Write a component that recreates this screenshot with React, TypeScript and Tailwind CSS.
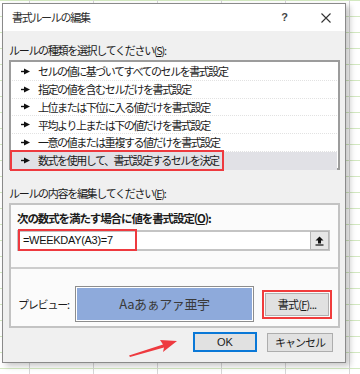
import React from 'react';

const jp = { fontFamily: "'Noto Sans CJK JP', 'Noto Sans', sans-serif" };

const rules = [
  'セルの値に基づいてすべてのセルを書式設定',
  '指定の値を含むセルだけを書式設定',
  '上位または下位に入る値だけを書式設定',
  '平均より上または下の値だけを書式設定',
  '一意の値または重複する値だけを書式設定',
  '数式を使用して、書式設定するセルを決定',
];

const Pointer = () => (
  <svg width="9" height="7" viewBox="0 0 9 7" className="shrink-0">
    <path d="M0 3.5H4" stroke="#111" strokeWidth="1.4" />
    <path d="M3 0.5L9 3.5L3 6.5Z" fill="#111" />
  </svg>
);

const App: React.FC = () => {
  return (
    <div
      className="relative w-[360px] h-[374px] overflow-hidden bg-white bg-[repeating-linear-gradient(to_right,transparent_0_29px,#d6d6d6_29px_30px,transparent_30px_64px),repeating-linear-gradient(to_bottom,#d3e9c1_0_1px,transparent_1px_16px)] pt-[3px] pl-[2px] text-[#1b1b1b]"
      style={jp}
    >
      <div className="w-[344px] h-[360px] flex flex-col border border-[#8a8a8a] bg-[#f0f0f0] shadow-[4px_3px_6px_rgba(0,0,0,0.22)]">
        {/* title bar */}
        <div className="h-[27px] shrink-0 bg-white flex items-center pl-[9px] pr-[14px]">
          <span className="text-[11px] tracking-[-1.3px] text-[#2a2a2a]">書式ルールの編集</span>
          <span className="ml-auto text-[11px] font-bold text-[#444] mr-[33px]" style={{ fontFamily: "'Liberation Sans', sans-serif" }}>?</span>
          <svg width="10" height="10" viewBox="0 0 10 10">
            <path d="M0.5 0.5L9.5 9.5M9.5 0.5L0.5 9.5" stroke="#333" strokeWidth="1.1" />
          </svg>
        </div>

        {/* body */}
        <div className="flex flex-col pl-[6px] pr-[5px]">
          <div className="mt-[11px] h-[16px] leading-[16px] text-[11px] tracking-[-1.3px]">
            ルールの種類を選択してください(<span className="underline">S</span>):
          </div>

          <div className="relative mt-[2px] h-[110px] border-2 border-[#9c9c9c] bg-white pt-[1px] px-[1px]">
            {rules.map((r, i) => (
              <div
                key={r}
                className={`h-[17.8px] flex items-center gap-[8px] pl-[9px] text-[11px] tracking-[-1.45px] border-b border-dotted ${
                  i === 5 ? 'bg-[#e1e1e6] border-transparent' : 'border-[#e2e2e2]'
                }`}
              >
                <Pointer />
                <span>{r}</span>
              </div>
            ))}
            <div className="absolute left-[-1px] top-[88px] w-[214px] h-[21px] border-2 border-[#ee3a3f]" />
          </div>

          <div className="mt-[15px] h-[16px] leading-[16px] text-[11px] tracking-[-1.3px]">
            ルールの内容を編集してください(<span className="underline">E</span>):
          </div>

          <div className="mt-[2px] h-[125px] border-2 border-[#c3c3c3] bg-[#fbfbfb] flex flex-col">
            <div className="pl-[6px] pr-[8px]">
              <div className="mt-[5px] h-[16px] leading-[16px] text-[11.5px] font-bold tracking-[-1.1px]">
                次の数式を満たす場合に値を書式設定(<span className="underline">O</span>):
              </div>
              <div className="relative mt-[4px] h-[21px] border-2 border-[#c4c4c4] bg-white flex items-center">
                <span className="pl-[4px] text-[11px] tracking-[-0.3px] text-[#111]" style={{ fontFamily: "'Liberation Sans', sans-serif" }}>
                  =WEEKDAY(A3)=7
                </span>
                <div className="ml-auto mr-[-1px] w-[19px] h-[19px] bg-[#e6e6e6] border border-[#b5b5b5] flex items-center justify-center">
                  <svg width="9" height="10" viewBox="0 0 9 10">
                    <path d="M4.5 0.5L8.5 4.5H6V7.5H3V4.5H0.5Z" fill="#111" />
                    <path d="M0.5 9H8.5" stroke="#111" strokeWidth="1.2" />
                  </svg>
                </div>
                <div className="absolute left-[-1px] top-[-3px] w-[119px] h-[22px] border-2 border-[#ee3a3f]" />
              </div>
            </div>

            <div className="mt-[16px] h-[2px] bg-[#cdcdcd]" />

            <div className="mt-[17px] flex items-center pl-[7px]">
              <span className="w-[57px] text-[11px] tracking-[-1.2px]">プレビュー:</span>
              <div className="w-[179px] h-[36px] border border-[#8d8d8d] p-[1px] bg-white">
                <div className="w-full h-full bg-[#8eaadb] flex items-center justify-center text-[13px] text-[#3a3a3a] tracking-[-0.4px]">
                  Aaあぁアァ亜宇
                </div>
              </div>
              <div className="ml-[8px] w-[70px] h-[29px] border-2 border-[#f03c3c] p-[1px]">
                <div className="w-full h-full bg-[#e1e1e1] border border-[#b0b0b0] flex items-center justify-center text-[11px] tracking-[-0.8px]">
                  書式(<span className="underline">F</span>)...
                </div>
              </div>
            </div>
          </div>

          <div className="mt-[4px] flex pl-[184px] gap-[10px]">
            <div className="w-[64px] h-[20px] border-2 border-[#0a78d7] bg-[#e1e1e1] flex items-center justify-center text-[11px] text-[#222]" style={{ fontFamily: "'Liberation Sans', sans-serif" }}>
              OK
            </div>
            <div className="w-[66px] h-[19px] mt-[1px] border border-[#adadad] bg-[#e1e1e1] flex items-center justify-center text-[11px] tracking-[-1px]">
              キャンセル
            </div>
          </div>
        </div>
      </div>

      {/* annotation arrow */}
      <svg className="absolute left-[128px] top-[337px]" width="52" height="22" viewBox="0 0 52 22">
        <path d="M2 20L36 10.5L35 15L49 4L32 3L35 7.5L1 18.5Z" fill="#ee3a3f" />
      </svg>
    </div>
  );
};

export default App;
